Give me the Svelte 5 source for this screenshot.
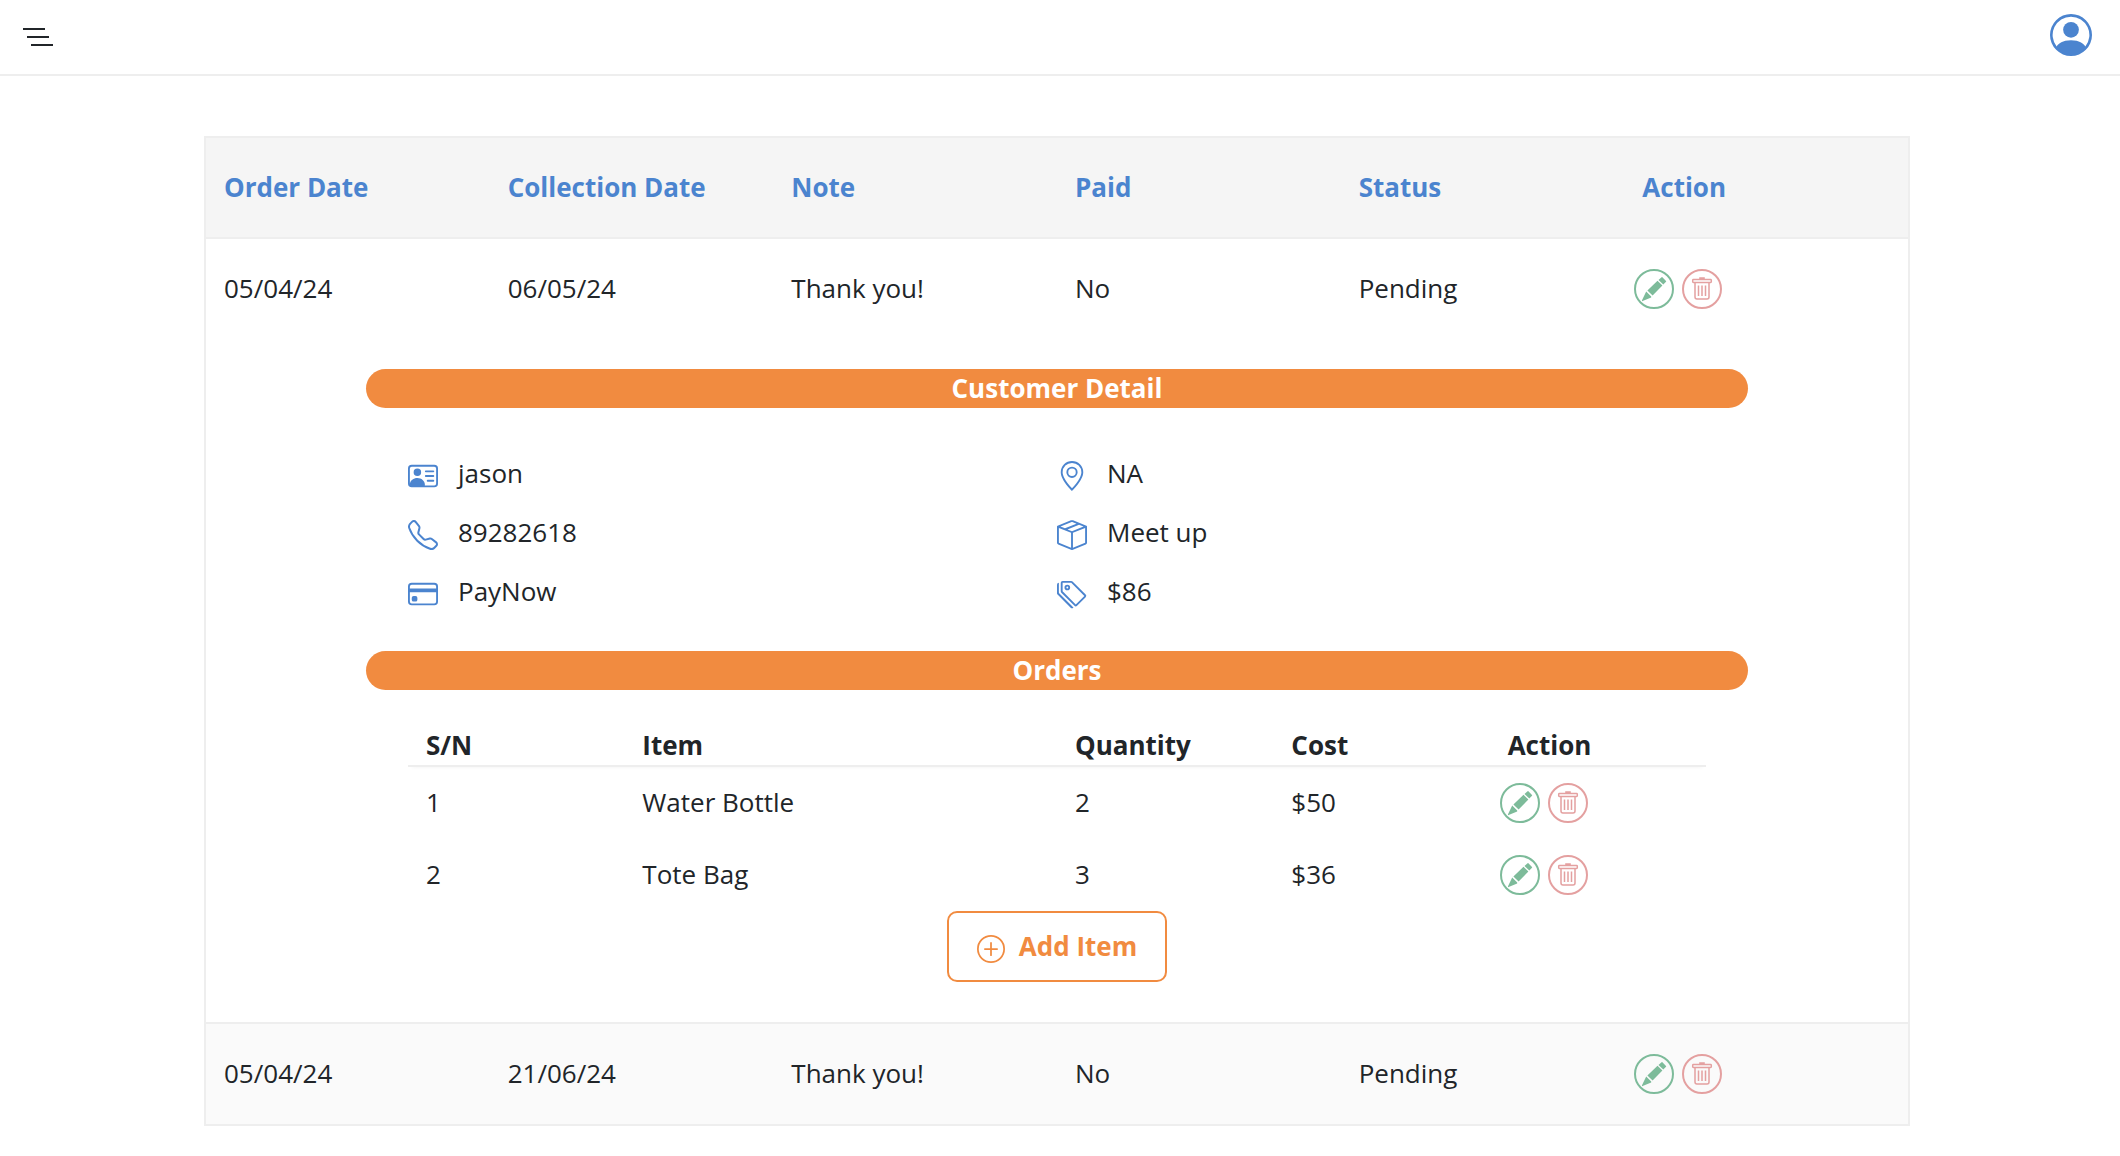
<script>
  const headings = ['Order Date', 'Collection Date', 'Note', 'Paid', 'Status', 'Action'];
  const first = ['05/04/24', '06/05/24', 'Thank you!', 'No', 'Pending'];
  const second = ['05/04/24', '21/06/24', 'Thank you!', 'No', 'Pending'];

  const details = [
    {
      text: 'jason',
      paths: [
        'M5 8a2 2 0 1 0 0-4 2 2 0 0 0 0 4m4-2.5a.5.5 0 0 1 .5-.5h4a.5.5 0 0 1 0 1h-4a.5.5 0 0 1-.5-.5M9 8a.5.5 0 0 1 .5-.5h4a.5.5 0 0 1 0 1h-4A.5.5 0 0 1 9 8m1 2.5a.5.5 0 0 1 .5-.5h3a.5.5 0 0 1 0 1h-3a.5.5 0 0 1-.5-.5',
        'M2 2a2 2 0 0 0-2 2v8a2 2 0 0 0 2 2h12a2 2 0 0 0 2-2V4a2 2 0 0 0-2-2zM1 4a1 1 0 0 1 1-1h12a1 1 0 0 1 1 1v8a1 1 0 0 1-1 1H8.96q.04-.245.04-.5C9 10.567 7.21 9 5 9c-2.086 0-3.8 1.398-3.984 3.181A1 1 0 0 1 1 12z'
      ]
    },
    {
      text: 'NA',
      paths: [
        'M12.166 8.94c-.524 1.062-1.234 2.12-1.96 3.07A32 32 0 0 1 8 14.58a32 32 0 0 1-2.206-2.57c-.726-.95-1.436-2.008-1.96-3.07C3.304 7.867 3 6.862 3 6a5 5 0 0 1 10 0c0 .862-.305 1.867-.834 2.94M8 16s6-5.686 6-10A6 6 0 0 0 2 6c0 4.314 6 10 6 10',
        'M8 8a2 2 0 1 1 0-4 2 2 0 0 1 0 4m0 1a3 3 0 1 0 0-6 3 3 0 0 0 0 6'
      ]
    },
    {
      text: '89282618',
      paths: [
        'M3.654 1.328a.678.678 0 0 0-1.015-.063L1.605 2.3c-.483.484-.661 1.169-.45 1.77a17.6 17.6 0 0 0 4.168 6.608 17.6 17.6 0 0 0 6.608 4.168c.601.211 1.286.033 1.77-.45l1.034-1.034a.678.678 0 0 0-.063-1.015l-2.307-1.794a.68.68 0 0 0-.58-.122l-2.19.547a1.75 1.75 0 0 1-1.657-.459L5.482 8.062a1.75 1.75 0 0 1-.46-1.657l.548-2.19a.68.68 0 0 0-.122-.58zM1.884.511a1.745 1.745 0 0 1 2.612.163L6.29 2.98c.329.423.445.974.315 1.494l-.547 2.19a.68.68 0 0 0 .178.643l2.457 2.457a.68.68 0 0 0 .644.178l2.189-.547a1.75 1.75 0 0 1 1.494.315l2.306 1.794c.829.645.905 1.87.163 2.611l-1.034 1.034c-.74.74-1.846 1.065-2.877.702a18.6 18.6 0 0 1-7.01-4.42 18.6 18.6 0 0 1-4.42-7.009c-.362-1.03-.037-2.137.703-2.877z'
      ]
    },
    {
      text: 'Meet up',
      paths: [
        'M8.186 1.113a.5.5 0 0 0-.372 0L1.846 3.5l2.404.961L10.404 2zm3.564 1.426L5.596 5 8 5.961 14.154 3.5zm3.25 1.7-6.5 2.6v7.922l6.5-2.6V4.24zM7.5 14.762V6.838L1 4.239v7.923zM7.443.184a1.5 1.5 0 0 1 1.114 0l7.129 2.852A.5.5 0 0 1 16 3.5v8.662a1 1 0 0 1-.629.928l-7.185 2.874a.5.5 0 0 1-.372 0L.63 13.09a1 1 0 0 1-.63-.928V3.5a.5.5 0 0 1 .314-.464z'
      ]
    },
    {
      text: 'PayNow',
      paths: [
        'M0 4a2 2 0 0 1 2-2h12a2 2 0 0 1 2 2v8a2 2 0 0 1-2 2H2a2 2 0 0 1-2-2zm2-1a1 1 0 0 0-1 1v1h14V4a1 1 0 0 0-1-1zm13 4H1v5a1 1 0 0 0 1 1h12a1 1 0 0 0 1-1z',
        'M2 10a1 1 0 0 1 1-1h1a1 1 0 0 1 1 1v1a1 1 0 0 1-1 1H3a1 1 0 0 1-1-1z'
      ]
    },
    {
      text: '$86',
      paths: [
        'M3 2v4.586l7 7L14.586 9l-7-7zM2 2a1 1 0 0 1 1-1h4.586a1 1 0 0 1 .707.293l7 7a1 1 0 0 1 0 1.414l-4.586 4.586a1 1 0 0 1-1.414 0l-7-7A1 1 0 0 1 2 6.586z',
        'M5.5 5a.5.5 0 1 1 0-1 .5.5 0 0 1 0 1m0 1a1.5 1.5 0 1 0 0-3 1.5 1.5 0 0 0 0 3M1 7.086a1 1 0 0 0 .293.707L8.75 15.25l-.043.043a1 1 0 0 1-1.414 0l-7-7A1 1 0 0 1 0 7.586V3a1 1 0 0 1 1-1z'
      ]
    }
  ];

  const items = [
    { sn: 1, name: 'Water Bottle', quantity: 2, cost: '$50' },
    { sn: 2, name: 'Tote Bag', quantity: 3, cost: '$36' }
  ];
</script>

{#snippet actions()}
  <div class="actions">
    <button class="round edit" aria-label="Edit">
      <svg viewBox="0 0 40 40">
        <circle cx="20" cy="20" r="19" />
        <path d="M27.6 8.2Q28 7.8 28.4 8.2L32 11.9Q32.4 12.3 32 12.7L29.3 15.5 24.5 10.9ZM23.5 11.8 28.4 16.5 18.6 26.6 13.4 21.6ZM12.2 22.4 17.2 27.4V28.4L8 32.2V31.2Z" />
      </svg>
    </button>
    <button class="round remove" aria-label="Delete">
      <svg viewBox="0 0 40 40">
        <circle cx="20" cy="20" r="19" />
        <path class="outline" d="M11.4 10.6H28.6Q29.3 10.6 29.3 11.2V12.8Q29.3 13.4 28.6 13.4H11.4Q10.7 13.4 10.7 12.8V11.2Q10.7 10.6 11.4 10.6ZM13 13.4V28Q13 30 15 30H25Q27 30 27 28V13.4M17.2 9H22.8M16.5 16.5V27M20 16.5V27M23.5 16.5V27" />
      </svg>
    </button>
  </div>
{/snippet}

<header class="navbar">
  <button class="burger" aria-label="Menu"><span></span><span></span><span></span></button>
  <svg class="avatar" viewBox="0 0 16 16">
    <path d="M11 6a3 3 0 1 1-6 0 3 3 0 0 1 6 0" />
    <path fill-rule="evenodd" d="M0 8a8 8 0 1 1 16 0A8 8 0 0 1 0 8m8-7a7 7 0 0 0-5.468 11.37C3.242 11.226 4.805 10 8 10s4.757 1.225 5.468 2.37A7 7 0 0 0 8 1" />
  </svg>
</header>

<main class="orders">
  <div class="row head">
    {#each headings as heading}<div>{heading}</div>{/each}
  </div>
  <section class="order">
    <div class="row">
      {#each first as value}<div>{value}</div>{/each}
      {@render actions()}
    </div>
    <div class="expanded">
      <h2>Customer Detail</h2>
      <div class="details">
        {#each details as detail}
          <div class="detail">
            <svg viewBox="0 0 16 16">
              {#each detail.paths as d}<path {d} />{/each}
            </svg>
            <span>{detail.text}</span>
          </div>
        {/each}
      </div>
      <h2>Orders</h2>
      <div class="items">
        <div class="item item-head">
          <div>S/N</div><div>Item</div><div>Quantity</div><div>Cost</div><div>Action</div>
        </div>
        {#each items as item}
          <div class="item">
            <div>{item.sn}</div>
            <div>{item.name}</div>
            <div>{item.quantity}</div>
            <div>{item.cost}</div>
            {@render actions()}
          </div>
        {/each}
      </div>
      <button class="add">
        <svg viewBox="0 0 16 16">
          <path d="M8 15A7 7 0 1 1 8 1a7 7 0 0 1 0 14m0 1A8 8 0 1 0 8 0a8 8 0 0 0 0 16" />
          <path d="M8 4a.5.5 0 0 1 .5.5v3h3a.5.5 0 0 1 0 1h-3v3a.5.5 0 0 1-1 0v-3h-3a.5.5 0 0 1 0-1h3v-3A.5.5 0 0 1 8 4" />
        </svg>
        <span>Add Item</span>
      </button>
    </div>
  </section>
  <div class="row last">
    {#each second as value}<div>{value}</div>{/each}
    {@render actions()}
  </div>
</main>

<style>
  :global(body) {
    margin: 0;
    background: #fff;
    color: #212529;
    font: 26px/39px 'Open Sans', 'Noto Sans', sans-serif;
  }
  button {
    padding: 0;
    border: 0;
    background: none;
    font: inherit;
    color: inherit;
  }
  svg { display: block; fill: currentColor; flex: none; }

  .navbar {
    box-sizing: border-box;
    height: 76px;
    padding: 14px 28px 0 23px;
    border-bottom: 2px solid #eee;
    display: flex;
    justify-content: space-between;
    align-items: flex-start;
  }
  .burger {
    display: flex;
    flex-direction: column;
    gap: 6px;
    margin-top: 14px;
    width: 30px;
  }
  .burger span { width: 22px; height: 2px; background: #212529; }
  .burger span:nth-child(2) { margin-left: 4px; }
  .burger span:nth-child(3) { margin-left: 8px; }
  .avatar { width: 42px; height: 42px; color: #4b84cf; }

  .orders {
    box-sizing: border-box;
    width: 1706px;
    margin: 60px 0 0 204px;
    border: 2px solid #eee;
  }
  .row {
    box-sizing: border-box;
    display: grid;
    grid-template-columns: repeat(6, 1fr);
    height: 100px;
    padding-top: 30px;
  }
  .row > div { padding-left: 18px; }
  .head {
    height: 101px;
    color: #4b84cf;
    background: #f5f5f5;
    font-weight: 700;
    border-bottom: 2px solid #eee;
  }
  .last { background: #fafafa; }

  .actions { display: flex; gap: 8px; }
  .row > .actions, .item > .actions { padding-left: 10px; }
  .round, .round svg { width: 40px; height: 40px; }
  .round circle, .outline { fill: none; stroke: currentColor; }
  .round circle { stroke-width: 2; }
  .outline { stroke-width: 1.5; }
  .edit { color: #7dbb9a; }
  .remove { color: #e4a0a0; }

  .order { border-bottom: 2px solid #eee; }
  .expanded {
    display: flex;
    flex-direction: column;
    padding: 30px 160px 40px;
  }
  h2 {
    margin: 0;
    font-size: 26px;
    font-weight: 700;
    color: #fff;
    background: #f18b40;
    text-align: center;
    border-radius: 20px;
  }
  .details {
    display: grid;
    grid-template-columns: 1fr 1fr;
    row-gap: 20px;
    padding: 46px 42px 40px;
  }
  .detail { display: flex; gap: 20px; }
  .detail svg { width: 30px; height: 30px; margin-top: 7px; color: #4b84cf; }

  .items { padding: 36px 42px 0; }
  .item {
    box-sizing: border-box;
    display: grid;
    grid-template-columns: 2fr 4fr 2fr 2fr 2fr;
    height: 72px;
    padding-top: 16px;
  }
  .item > div { padding-left: 18px; }
  .item-head {
    height: 41px;
    padding: 0;
    font-weight: 700;
    border-bottom: 2px solid #eee;
    box-shadow: 0 4px 4px -4px rgba(0, 0, 0, 0.06);
  }
  .add {
    box-sizing: border-box;
    align-self: center;
    display: flex;
    align-items: flex-start;
    gap: 14px;
    height: 71px;
    padding: 14px 28px 0;
    border: 2px solid #f18b40;
    border-radius: 10px;
    color: #f18b40;
    font-weight: 700;
  }
  .add svg { width: 28px; height: 28px; margin-top: 8px; }
</style>
